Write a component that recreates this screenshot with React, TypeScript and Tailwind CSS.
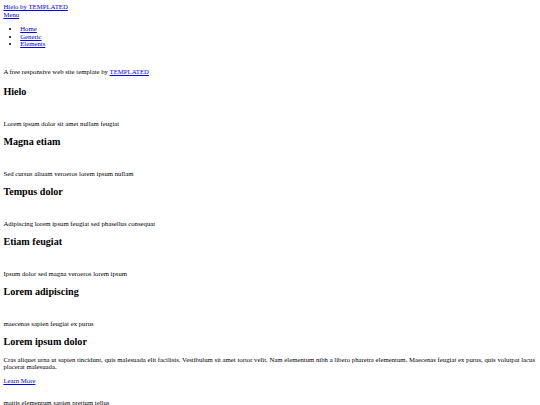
import React from 'react';

const slides = [
    { tag: 'Lorem ipsum dolor sit amet nullam feugiat', title: 'Magna etiam' },
    { tag: 'Sed cursus aliuam veroeros lorem ipsum nullam', title: 'Tempus dolor' },
    { tag: 'Adipiscing lorem ipsum feugiat sed phasellus consequat', title: 'Etiam feugiat' },
    { tag: 'Ipsum dolor sed magna veroeros lorem ipsum', title: 'Lorem adipiscing' },
];

const Link = ({ children }: { children: React.ReactNode }) => (
    <a href="#" className="text-[#0000ee] underline">{children}</a>
);

export default function App() {
    return (
        <div className="min-h-[405px] bg-white px-[3.4px] pt-[3.4px] font-['Liberation_Serif',serif] text-[6.75px] leading-[7.6px] text-black">
            {/* Header */}
            <div><Link>Hielo by TEMPLATED</Link></div>
            <div><Link>Menu</Link></div>

            {/* Nav */}
            <ul className="mt-[6.75px] list-disc pl-[16.8px] leading-[7.4px]">
                <li><Link>Home</Link></li>
                <li><Link>Generic</Link></li>
                <li><Link>Elements</Link></li>
            </ul>

            {/* Banner */}
            <p className="mt-[20px]">
                A free responsive web site template by <Link>TEMPLATED</Link>
            </p>
            <h2 className="mt-[10.8px] text-[10.125px] font-bold leading-[11.6px]">Hielo</h2>

            {slides.map((s) => (
                <div key={s.title}>
                    <p className="mt-[22.7px]">{s.tag}</p>
                    <h2 className="mt-[8.1px] text-[10.125px] font-bold leading-[11.6px]">{s.title}</h2>
                </div>
            ))}

            {/* Intro */}
            <p className="mt-[22.7px]">maecenas sapien feugiat ex purus</p>
            <h2 className="mt-[8.1px] text-[10.125px] font-bold leading-[11.6px]">Lorem ipsum dolor</h2>
            <p className="mt-[8.3px] leading-[7.4px]">
                Cras aliquet urna ut sapien tincidunt, quis malesuada elit facilisis. Vestibulum sit amet tortor velit. Nam elementum nibh a libero pharetra elementum. Maecenas feugiat ex purus, quis volutpat lacus placerat malesuada.
            </p>
            <p className="mt-[6.8px]"><Link>Learn More</Link></p>

            <p className="mt-[14px]">mattis elementum sapien pretium tellus</p>
        </div>
    );
}
